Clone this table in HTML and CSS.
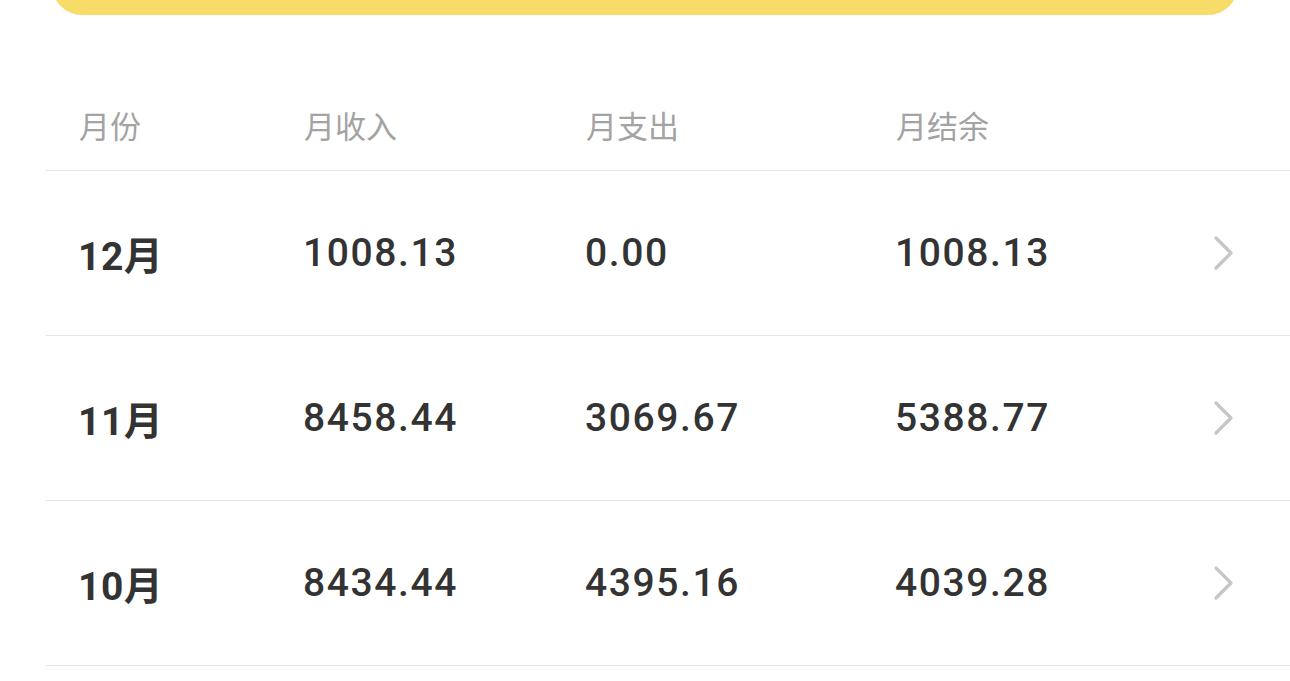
FILE: index.html
```html
<!DOCTYPE html>
<html lang="zh-CN">
<head>
<meta charset="utf-8">
<link rel="stylesheet" href="styles.css">
</head>
<body>
<div class="banner"></div>
<div class="table">
  <div class="row head">
    <div class="cell">月份</div>
    <div class="cell">月收入</div>
    <div class="cell">月支出</div>
    <div class="cell">月结余</div>
    <div class="cell"></div>
  </div>
  <div class="row item">
    <div class="cell month">12月</div>
    <div class="cell num">1008.13</div>
    <div class="cell num">0.00</div>
    <div class="cell num">1008.13</div>
    <div class="cell arrow"><svg width="22" height="36" viewBox="0 0 22 36"><path d="M3 3 L18 18 L3 33" fill="none" stroke="#c6c6c6" stroke-width="3.2" stroke-linecap="round" stroke-linejoin="round"/></svg></div>
  </div>
  <div class="row item">
    <div class="cell month">11月</div>
    <div class="cell num">8458.44</div>
    <div class="cell num">3069.67</div>
    <div class="cell num">5388.77</div>
    <div class="cell arrow"><svg width="22" height="36" viewBox="0 0 22 36"><path d="M3 3 L18 18 L3 33" fill="none" stroke="#c6c6c6" stroke-width="3.2" stroke-linecap="round" stroke-linejoin="round"/></svg></div>
  </div>
  <div class="row item">
    <div class="cell month">10月</div>
    <div class="cell num">8434.44</div>
    <div class="cell num">4395.16</div>
    <div class="cell num">4039.28</div>
    <div class="cell arrow"><svg width="22" height="36" viewBox="0 0 22 36"><path d="M3 3 L18 18 L3 33" fill="none" stroke="#c6c6c6" stroke-width="3.2" stroke-linecap="round" stroke-linejoin="round"/></svg></div>
  </div>
</div>
</body>
</html>
```
FILE: styles.css
```css
html, body {
  margin: 0;
  padding: 0;
  background: #ffffff;
}
body {
  font-family: Roboto, "Noto Sans CJK SC", sans-serif;
  overflow: hidden;
}
.banner {
  margin: -30px 52px 0 52px;
  height: 45px;
  background: #f8dc69;
  border-radius: 0 0 30px 30px;
}
.table {
  margin: 65px 0 0 46px;
}
.row {
  display: grid;
  grid-template-columns: 225px 282px 310px 1fr 40px;
  align-items: center;
  padding: 0 37px 0 32px;
  border-bottom: 1px solid #e4e4e4;
}
.head {
  height: 88px;
  padding-bottom: 2px;
  color: #a3a3a3;
  font-size: 31px;
  font-family: "Noto Sans CJK SC", sans-serif;
  font-weight: 400;
}
.head .cell {
  padding-left: 1px;
}
.item {
  height: 164px;
  color: #333333;
}
.num {
  font-family: Roboto, sans-serif;
  font-weight: 500;
  font-size: 39px;
  letter-spacing: 1.6px;
}
.month {
  font-family: Roboto, "Noto Sans CJK SC", sans-serif;
  font-weight: 700;
  font-size: 39px;
  letter-spacing: 0.5px;
}
.arrow {
  display: flex;
  align-items: center;
}
.arrow svg {
  display: block;
}
```
